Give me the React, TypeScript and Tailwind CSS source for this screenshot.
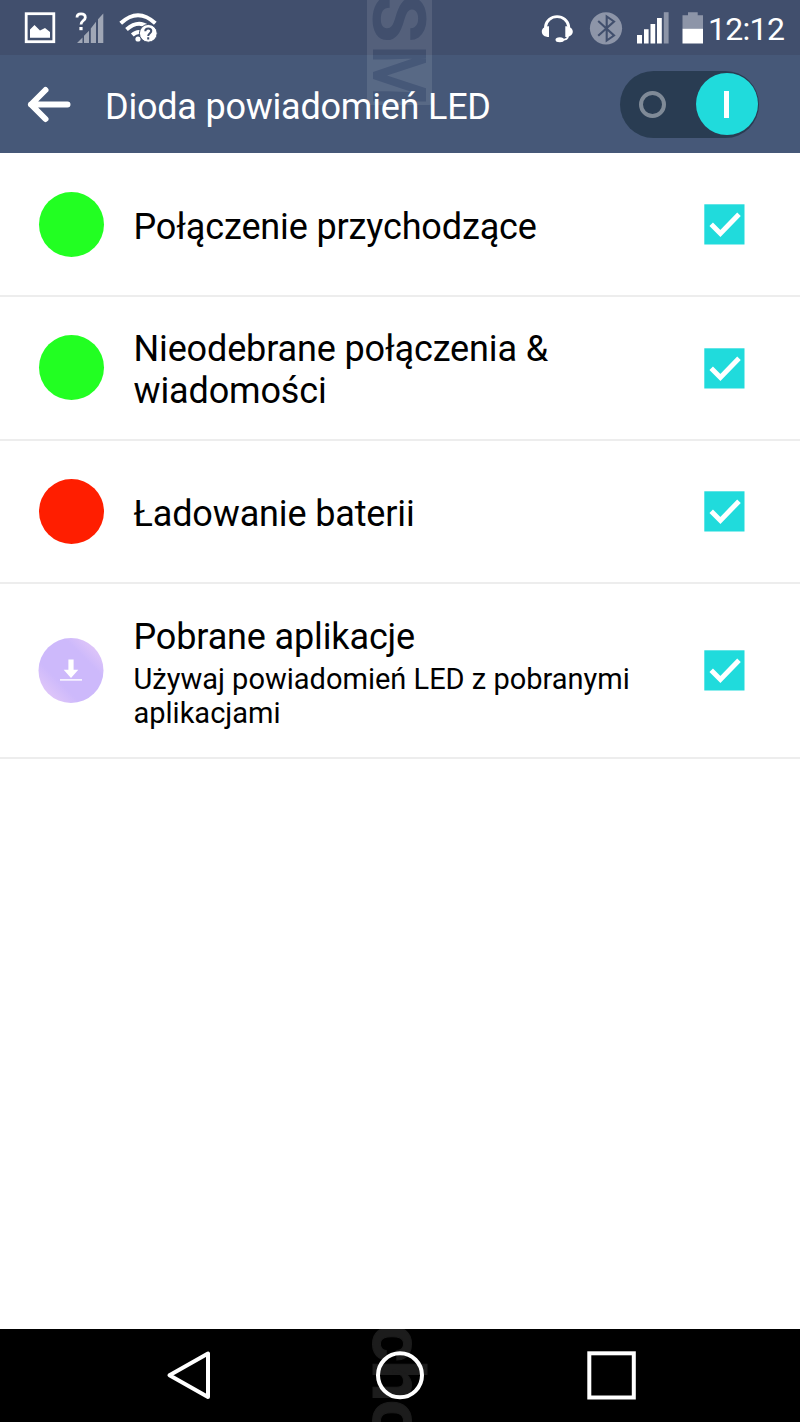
interface LedItem {
  title: string;
  summary?: string;
  color?: string;
  rowClass: string;
}

const items: LedItem[] = [
  { title: 'Połączenie przychodzące', color: 'bg-[#22ff22]', rowClass: 'h-[144px] pt-px' },
  { title: 'Nieodebrane połączenia & wiadomości', color: 'bg-[#22ff22]', rowClass: 'h-[144px]' },
  { title: 'Ładowanie baterii', color: 'bg-[#ff1e00]', rowClass: 'h-[143px]' },
  {
    title: 'Pobrane aplikacje',
    summary: 'Używaj powiadomień LED z pobranymi aplikacjami',
    rowClass: 'h-[175px]',
  },
];

function StatusBar() {
  return (
    <div className="flex h-[55px] items-start bg-[#414f6d] text-white">
      <svg className="h-[55px] w-[200px]" viewBox="0 0 200 55" fill="none">
        {/* gallery */}
        <rect x="26.2" y="13.7" width="27.6" height="28" stroke="white" strokeWidth="2.8" />
        <path d="M30 37.7V29.5L34.5 25L40 30.5L45 28L50 32V37.7Z" fill="white" />
        {/* unknown signal */}
        <path d="M77 17.5C77 14.8 78.8 13.8 81 13.8C83.5 13.8 85.3 15.2 85.3 17.4C85.3 20.5 81 20.7 81 24.6" stroke="white" strokeWidth="2.8" />
        <rect x="79.4" y="27" width="3.2" height="3.2" fill="white" />
        <path d="M77 43L82.5 37.4V43ZM84 43V35.8L89 30.8V43ZM90.8 43V28.5L96 21.8V43ZM98 43V19.3L103.3 13.5V43Z" fill="#a0a7b6" />
        {/* wifi */}
        <path d="M120.7 23.3Q138 7.2 155.3 23.3M126.5 29.5Q138 19.5 148 27M132.3 35Q136 31.5 140 32" stroke="white" strokeWidth="4" />
        <circle cx="138" cy="39" r="2.6" fill="white" />
        <circle cx="148.3" cy="33.3" r="8.9" fill="white" stroke="#414f6d" strokeWidth="1" />
        <path d="M145.3 31.2C145.3 29.3 146.6 28.6 148.2 28.6C150 28.6 151.3 29.6 151.3 31.1C151.3 33.2 148.2 33.3 148.2 36M148.2 37.3V39.5" stroke="#414f6d" strokeWidth="2" />
      </svg>
      <svg className="ml-[330px] h-[55px] w-[178px]" viewBox="530 0 178 55" fill="none">
        {/* headset */}
        <path d="M545.5 29V26.5A11.7 11.4 0 0 1 568.7 26.5V29" stroke="white" strokeWidth="2.8" />
        <path d="M549 26.2V37C544.5 37 541.8 34.8 541.8 31.5C541.8 28.5 544.5 26.2 549 26.2ZM565.3 26.2V37C569.8 37 572.8 34.8 572.8 31.5C572.8 28.5 569.8 26.2 565.3 26.2Z" fill="white" />
        <path d="M568 36C568 39 565.5 40 561 40" stroke="white" strokeWidth="1.8" />
        <ellipse cx="559.8" cy="39.8" rx="4.3" ry="2.5" fill="white" />
        {/* bluetooth */}
        <circle cx="606" cy="28.3" r="16.1" fill="#8d95a8" />
        <path d="M598.2 21L614 35.5L606.7 40.5V16.5L614 21.5L598.2 35.8" stroke="#414f6d" strokeWidth="2.1" />
        {/* signal */}
        <path d="M637 35H642V43.5H637ZM644 29.3H648.6V43.5H644ZM650.5 24H655.2V43.5H650.5ZM657 18H661.8V43.5H657Z" fill="white" />
        <rect x="663.8" y="12.2" width="4.8" height="31.3" fill="#8d95a8" />
        {/* battery */}
        <path d="M682.5 15.3H688V12.3H697.7V15.3H703V29H682.5Z" fill="#8d95a8" />
        <rect x="682.5" y="28.8" width="20.5" height="14.7" fill="white" />
      </svg>
      <span className="text-[32px] leading-[58px] tracking-[-0.7px] whitespace-nowrap">12:12</span>
    </div>
  );
}

function Header() {
  return (
    <div className="flex h-[98px] items-center bg-[#465878] text-white">
      <svg className="ml-[24px] h-[48px] w-[50px]" viewBox="24 80 50 48" fill="none" stroke="white" strokeWidth="6" strokeLinecap="round" strokeLinejoin="round">
        <path d="M45.5 90L31 104.5L45.5 119M31 104.5H67.5" />
      </svg>
      <h1 className="ml-[31px] flex-1 pt-[5px] text-[36px] leading-[42px] tracking-[-0.22px] whitespace-nowrap">Dioda powiadomień LED</h1>
      <div className="mr-[41px] flex h-[67px] w-[139px] items-center rounded-full bg-[#293c52] pr-[1.5px] pl-[19px]">
        <span className="size-[27px] rounded-full border-4 border-[#7f8a97]" />
        <span className="ml-auto flex size-[62px] items-center justify-center rounded-full bg-[#20dbdc]">
          <span className="h-[27px] w-[5px] bg-white" />
        </span>
      </div>
    </div>
  );
}

function DownloadBadge() {
  return (
    <svg className="size-[66px] shrink-0" viewBox="0 0 66 66">
      <defs>
        <linearGradient id="badge" x1="0.1" y1="0.9" x2="0.9" y2="0.1">
          <stop offset="0" stopColor="#e2c8f8" />
          <stop offset="0.28" stopColor="#cdb9fb" />
          <stop offset="0.75" stopColor="#cdb9fb" />
          <stop offset="1" stopColor="#e2c8f8" />
        </linearGradient>
      </defs>
      <circle cx="33" cy="32.5" r="32.5" fill="url(#badge)" />
      <path d="M30.4 21.5H35.6V31.7H40.3L33 40L25.7 31.7H30.4Z" fill="white" />
      <rect x="22" y="41.2" width="22" height="1.4" fill="white" />
    </svg>
  );
}

function LedDot({ color }: { color: string }) {
  return (
    <span className="flex size-[66px] shrink-0 justify-center">
      <span className={`size-[65px] rounded-full ${color}`} />
    </span>
  );
}

function Checkbox() {
  return (
    <svg className="mr-[55px] size-[41px] shrink-0" viewBox="0 0 41 41" fill="none">
      <rect x="0.3" y="0.3" width="40.2" height="40.2" fill="#20dbdc" />
      <path d="M7.2 20.2L16.4 29.4L35 10.2" stroke="white" strokeWidth="5" />
    </svg>
  );
}

function Row({ item }: { item: LedItem }) {
  return (
    <div className={`flex items-center border-b-2 border-[#ededed] pl-[38px] ${item.rowClass}`}>
      {item.color ? <LedDot color={item.color} /> : <DownloadBadge />}
      <div className="mr-[58px] ml-[29.5px] flex-1 pt-1">
        <p className="text-[36px] leading-[42px] tracking-[-0.14px]">{item.title}</p>
        {item.summary && <p className="mt-1 text-[29px] leading-[34px]">{item.summary}</p>}
      </div>
      <Checkbox />
    </div>
  );
}

function NavBar() {
  return (
    <div className="h-[93px] bg-black">
      <svg className="h-[93px] w-[800px]" viewBox="0 1329 800 93" fill="none">
        <g transform="translate(373 1328) rotate(90)">
          <text x="-4" y="0" fontSize="73" fontWeight="700" letterSpacing="-1.5" fill="#1c1c1c" stroke="#1c1c1c" strokeWidth="1">cho</text>
        </g>
        <g stroke="white" strokeWidth="4">
          <path d="M208 1353.5V1397L169.5 1375.3Z" strokeLinejoin="round" />
          <circle cx="400" cy="1375.3" r="22" />
          <rect x="589.3" y="1353.3" width="44.5" height="44.2" />
        </g>
      </svg>
    </div>
  );
}

function Watermark() {
  return (
    <svg className="pointer-events-none absolute top-0 left-[367px] h-[106px] w-[66px]" viewBox="0 0 66 106">
      <defs>
        <mask id="letters">
          <rect width="66" height="106" fill="white" />
          <g transform="translate(5.5 0) rotate(90)" fontSize="75" fontWeight="700" fill="black">
            <text x="-7" y="0" textLength="50" lengthAdjust="spacingAndGlyphs">S</text>
            <text x="45" y="0" textLength="61" lengthAdjust="spacingAndGlyphs">M</text>
          </g>
        </mask>
      </defs>
      <path d="M0 0H65V102Q65 105 62 105H0Z" fill="white" fillOpacity="0.1" mask="url(#letters)" />
    </svg>
  );
}

export default function App() {
  return (
    <div className="relative flex h-[1422px] w-[800px] flex-col overflow-hidden bg-white font-['Roboto',sans-serif] text-black">
      <StatusBar />
      <Header />
      <div className="flex-1">
        {items.map((item) => (
          <Row key={item.title} item={item} />
        ))}
      </div>
      <NavBar />
      <Watermark />
    </div>
  );
}
